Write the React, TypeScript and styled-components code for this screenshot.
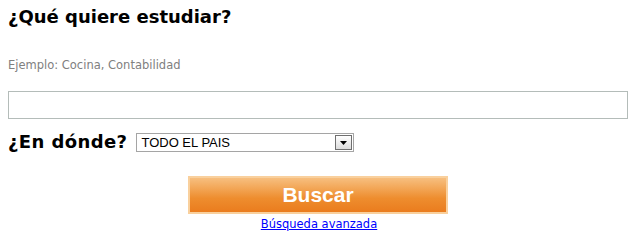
import styled, { createGlobalStyle } from "styled-components";

const GlobalStyle = createGlobalStyle`
  body {
    margin: 0;
    background: #ffffff;
    font-family: "DejaVu Sans", Verdana, sans-serif;
  }
`;

const SearchForm = styled.form`
  display: flex;
  flex-direction: column;
  padding: 4px 8px 0;
  width: 622px;
`;

const Heading = styled.h2`
  margin: 0;
  font-size: 18px;
  font-weight: bold;
  color: #000;
  line-height: 26px;
`;

const Hint = styled.p`
  margin: 28px 0 0;
  font-size: 11.5px;
  color: #808080;
  line-height: 14px;
`;

const TextField = styled.input`
  box-sizing: border-box;
  width: 620px;
  height: 28px;
  margin-top: 19px;
  border: 1px solid #b4bcb9;
  outline: none;
  font-family: inherit;
  font-size: 13px;
`;

const WhereRow = styled.div`
  display: flex;
  align-items: center;
  gap: 9px;
  margin-top: 10px;
`;

const WhereLabel = styled.label`
  font-size: 18px;
  font-weight: bold;
  line-height: 26px;
  letter-spacing: 0.4px;
`;

const SelectBox = styled.div`
  box-sizing: border-box;
  display: flex;
  align-items: center;
  justify-content: space-between;
  width: 218px;
  height: 19px;
  margin-top: 1px;
  border: 1px solid #a5a5a5;
  padding: 0 1px 0 4px;
  font-family: "Liberation Sans", Arial, sans-serif;
  font-size: 13px;
  color: #000;
`;

const DropButton = styled.span`
  box-sizing: border-box;
  display: flex;
  align-items: center;
  justify-content: center;
  width: 17px;
  height: 15px;
  border: 1px solid #6f6f6f;
  background: linear-gradient(#ffffff, #dcdcdc);
`;

const ButtonRow = styled.div`
  display: flex;
  flex-direction: column;
  align-items: center;
  margin-top: 21px;
`;

const SearchButton = styled.button`
  box-sizing: border-box;
  width: 260px;
  height: 38px;
  margin-right: 2px;
  border: 2px solid #f9d09d;
  background: linear-gradient(#f7bf7f, #ee8d2e 60%, #ea7c1e);
  color: #fff;
  font-family: "Liberation Sans", Arial, sans-serif;
  font-size: 21px;
  font-weight: bold;
  padding: 0;
  cursor: pointer;
`;

const AdvancedLink = styled.a`
  margin-top: 3px;
  font-size: 11.5px;
  color: #0000ff;
  text-decoration: underline;
  line-height: 14px;
`;

export default function App() {
  return (
    <>
      <GlobalStyle />
      <SearchForm onSubmit={(e) => e.preventDefault()}>
        <Heading>¿Qué quiere estudiar?</Heading>
        <Hint>Ejemplo: Cocina, Contabilidad</Hint>
        <TextField type="text" />
        <WhereRow>
          <WhereLabel>¿En dónde?</WhereLabel>
          <SelectBox>
            <span>TODO EL PAIS</span>
            <DropButton>
              <svg width="7" height="4" viewBox="0 0 7 4">
                <path d="M0 0h7L3.5 4z" fill="#000" />
              </svg>
            </DropButton>
          </SelectBox>
        </WhereRow>
        <ButtonRow>
          <SearchButton type="submit">Buscar</SearchButton>
          <AdvancedLink href="#">Búsqueda avanzada</AdvancedLink>
        </ButtonRow>
      </SearchForm>
    </>
  );
}
